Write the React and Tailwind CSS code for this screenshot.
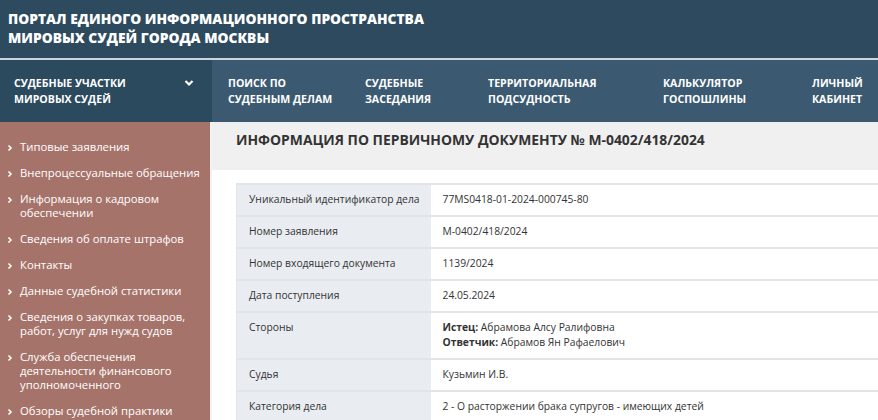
import React from 'react';

const navItems = [
  { label: ['Поиск по', 'судебным делам'], w: 'w-[137px]' },
  { label: ['Судебные', 'заседания'], w: 'w-[123px]' },
  { label: ['Территориальная', 'подсудность'], w: 'w-[175px]' },
  { label: ['Калькулятор', 'госпошлины'], w: 'w-[149px]' },
  { label: ['Личный', 'кабинет'], w: 'w-auto' },
];

const sideItems = [
  ['Типовые заявления'],
  ['Внепроцессуальные обращения'],
  ['Информация о кадровом', 'обеспечении'],
  ['Сведения об оплате штрафов'],
  ['Контакты'],
  ['Данные судебной статистики'],
  ['Сведения о закупках товаров,', 'работ, услуг для нужд судов'],
  ['Служба обеспечения', 'деятельности финансового', 'уполномоченного'],
  ['Обзоры судебной практики'],
];

const rows = [
  { label: 'Уникальный идентификатор дела', value: '77MS0418-01-2024-000745-80' },
  { label: 'Номер заявления', value: 'М-0402/418/2024' },
  { label: 'Номер входящего документа', value: '1139/2024' },
  { label: 'Дата поступления', value: '24.05.2024' },
  {
    label: 'Стороны',
    value: (
      <div className="flex flex-col">
        <span><b className="font-bold">Истец:</b> Абрамова Алсу Ралифовна</span>
        <span><b className="font-bold">Ответчик:</b> Абрамов Ян Рафаелович</span>
      </div>
    ),
  },
  { label: 'Судья', value: 'Кузьмин И.В.' },
  { label: 'Категория дела', value: '2 - О расторжении брака супругов - имеющих детей' },
];

const Chevron = () => (
  <svg width="6" height="8" viewBox="0 0 6 8" className="shrink-0 mt-[4px]">
    <path d="M1.5 1.5L4 4L1.5 6.5" stroke="white" strokeWidth="1.6" fill="none" />
  </svg>
);

export default function App() {
  return (
    <div className="w-[878px] h-[420px] overflow-hidden bg-white font-['Open_Sans',sans-serif]">
      {/* Top header */}
      <div className="h-[60px] bg-[#2d4a5e] border-b-2 border-[#c9d6df] px-[8px] pt-[9px]">
        <h1 className="text-white uppercase font-extrabold text-[13.8px] leading-[19px] font-['Open_Sans',sans-serif]">
          Портал единого информационного пространства
          <br />
          мировых судей города Москвы
        </h1>
      </div>

      {/* Main nav */}
      <div className="flex h-[62px] bg-[#3b5a71]">
        <div className="w-[212px] bg-[#2c4a5e] flex items-start justify-between pl-[14px] pr-[18px] pt-[15px]">
          <span className="text-white uppercase font-bold text-[10.6px] leading-[16px]">
            Судебные участки
            <br />
            мировых судей
          </span>
          <svg width="10" height="8" viewBox="0 0 10 8" className="mt-[4px]">
            <path d="M1.5 2L5 5.5L8.5 2" stroke="white" strokeWidth="2.2" fill="none" />
          </svg>
        </div>
        <div className="flex pl-[16px] pt-[15px]">
          {navItems.map((item) => (
            <div key={item.label[0]} className={`${item.w} text-white uppercase font-bold text-[10.6px] leading-[16px]`}>
              {item.label[0]}
              <br />
              {item.label[1]}
            </div>
          ))}
        </div>
      </div>

      <div className="flex">
        {/* Sidebar */}
        <div className="w-[212px] shrink-0 h-[300px] bg-[#a6736a] border-r-[2px] border-[#f6f2f1] pt-[18px] pl-[7px] flex flex-col gap-[12px]">
          {sideItems.map((lines) => (
            <div key={lines[0]} className="flex gap-[7px] text-white text-[11.3px] leading-[14px]">
              <Chevron />
              <div>
                {lines.map((l) => (
                  <div key={l}>{l}</div>
                ))}
              </div>
            </div>
          ))}
        </div>

        {/* Content */}
        <div className="flex-1 min-w-0">
          <div className="h-[48px] bg-[#f0f0f0] pl-[24px] pt-[8px]">
            <h2 className="uppercase font-bold text-[#333] text-[13.9px] leading-[20px]">
              Информация по первичному документу № М-0402/418/2024
            </h2>
          </div>
          <div className="pl-[24px] pt-[13px]">
            <table className="w-[700px] border-collapse text-[10.3px] text-[#333]">
              <tbody>
                {rows.map((r) => (
                  <tr key={r.label} className="border-t-2 border-[#e2e5e8]">
                    <td className="w-[194px] bg-[#e9edf2] align-top pl-[12px] pt-[7px] pb-[8px] leading-[15px] border-l border-[#e2e5e8] whitespace-nowrap">
                      {r.label}
                    </td>
                    <td className="align-top pl-[12px] pt-[7px] pb-[8px] leading-[15px]">{r.value}</td>
                  </tr>
                ))}
              </tbody>
            </table>
          </div>
        </div>
      </div>
    </div>
  );
}
